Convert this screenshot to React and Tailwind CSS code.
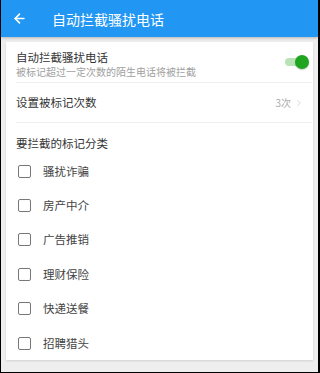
import { ArrowLeft, ChevronRight } from 'lucide-react'

const categories = ['骚扰诈骗', '房产中介', '广告推销', '理财保险', '快递送餐', '招聘猎头']

const font = { fontFamily: '"Noto Sans CJK SC", "Noto Sans", sans-serif' }

export default function App() {
  return (
    <div
      style={font}
      className="w-[320px] h-[373px] bg-[#eeeeee] border-l border-r-2 border-b border-black flex flex-col overflow-hidden"
    >
      <div className="h-[37px] bg-[#2196f3] flex items-center shadow-[0_1px_3px_rgba(0,0,0,0.25)] shrink-0">
        <ArrowLeft className="ml-[11px] text-white" size={15} strokeWidth={2.6} />
        <span className="ml-[25px] text-white text-[14px] leading-none">自动拦截骚扰电话</span>
      </div>

      <div className="mx-[5px] mt-[5px] bg-white shadow-[0_1px_2px_rgba(0,0,0,0.12)]">
        <div className="ml-[10px] mr-[1px] h-[41px] flex items-center border-b border-[#eeeeee]">
          <div className="flex-1 flex flex-col pt-[3px]">
            <span className="text-[11.5px] leading-[15px] text-[#333]">自动拦截骚扰电话</span>
            <span className="text-[10px] leading-[13px] text-[#a0a0a0]">被标记超过一定次数的陌生电话将被拦截</span>
          </div>
          <div className="relative w-[24px] h-[14px] mr-[3px] flex items-center">
            <div className="w-[18px] h-[8px] rounded-full bg-[#b9e3b7]" />
            <div className="absolute right-0 top-0 w-[14px] h-[14px] rounded-full bg-[#1fa51f] shadow-[0_1px_1px_rgba(0,0,0,0.2)]" />
          </div>
        </div>

        <div className="ml-[10px] mr-[1px] h-[40px] flex items-center border-b border-[#eeeeee]">
          <span className="flex-1 text-[11.5px] text-[#333]">设置被标记次数</span>
          <span className="text-[10px] text-[#aaaaaa]">3次</span>
          <ChevronRight className="ml-[3px] mr-[8px] text-[#d0d0d0]" size={10} strokeWidth={2} />
        </div>

        <div className="ml-[10px] pt-[12px] pb-[3px]">
          <span className="block text-[11.5px] leading-[16px] text-[#333]">要拦截的标记分类</span>
        </div>

        <div className="flex flex-col">
          {categories.map((c) => (
            <div key={c} className="h-[34.4px] flex items-center pl-[12px]">
              <div className="w-[13px] h-[13px] border-[1.5px] border-[#777] rounded-[2px]" />
              <span className="ml-[12px] text-[11.5px] text-[#444]">{c}</span>
            </div>
          ))}
        </div>
      </div>
    </div>
  )
}
